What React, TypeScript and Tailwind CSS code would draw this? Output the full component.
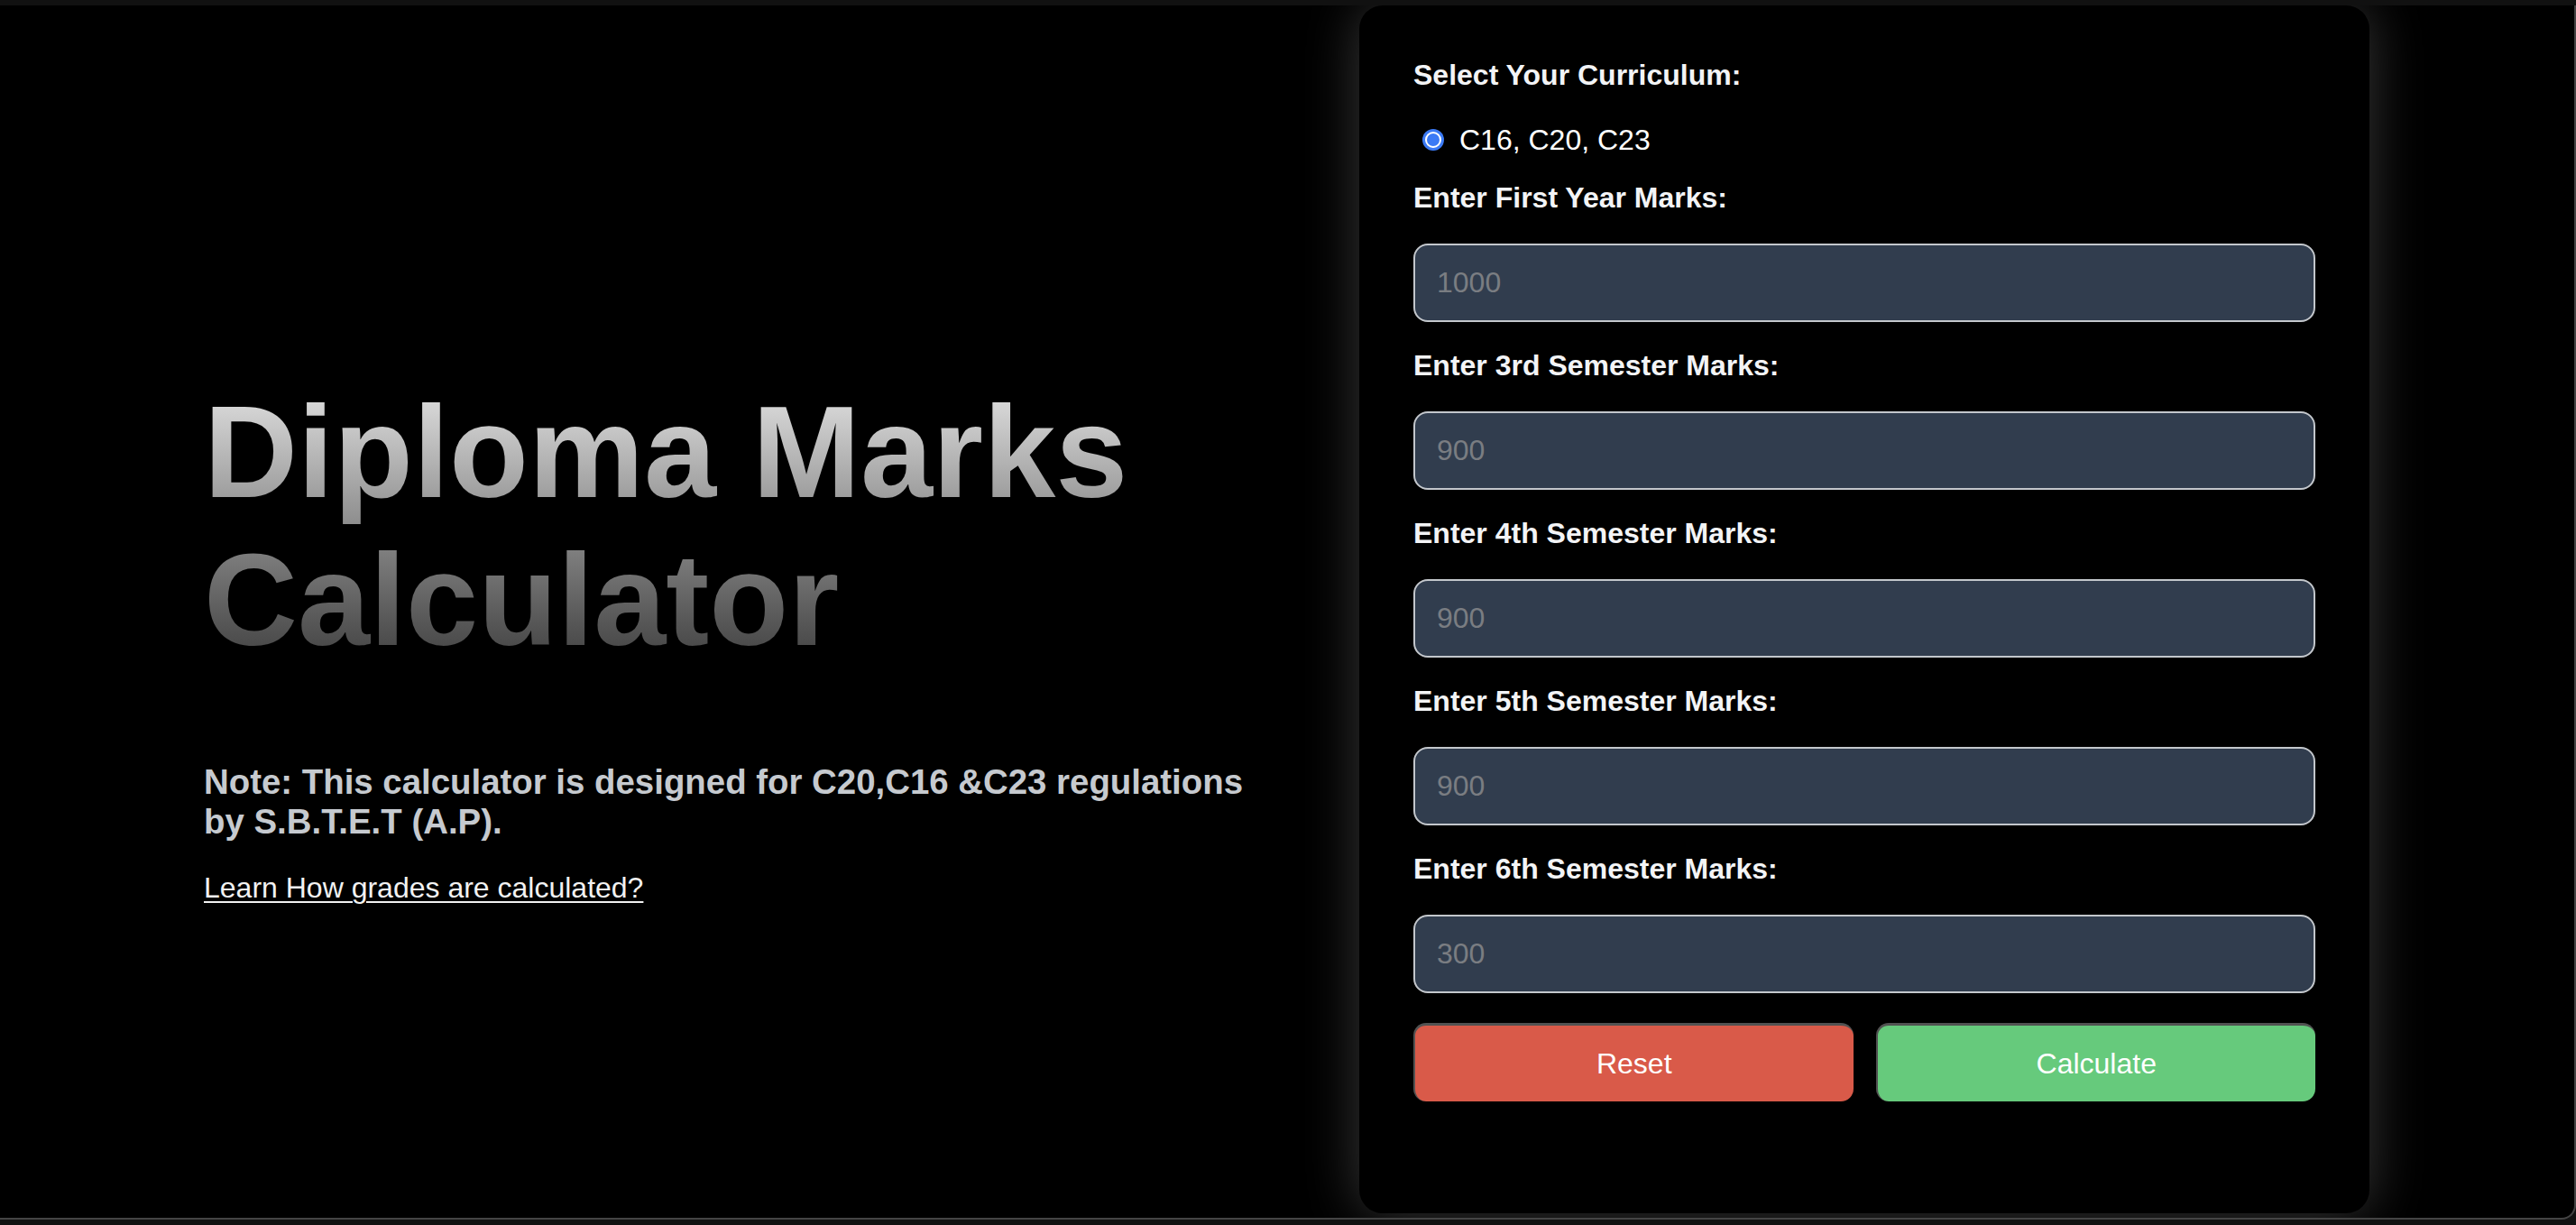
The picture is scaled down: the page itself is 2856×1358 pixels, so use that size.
import React from "react";

const fields = [
  { label: "Enter First Year Marks:", ph: "1000" },
  { label: "Enter 3rd Semester Marks:", ph: "900" },
  { label: "Enter 4th Semester Marks:", ph: "900" },
  { label: "Enter 5th Semester Marks:", ph: "900" },
  { label: "Enter 6th Semester Marks:", ph: "300" },
];

export default function App() {
  return (
    <div
      className="w-full h-[1358px] bg-[#111111] overflow-hidden"
      style={{ fontFamily: '"Liberation Sans", Arial, Helvetica, sans-serif' }}
    >
      <div className="mt-[6px] h-[1346px] bg-black border-b-2 border-r-2 border-[#444] rounded-br-[16px] overflow-hidden flex justify-between pl-[226px] pr-[227px]">
        {/* Left column */}
        <div className="w-[1190px] pt-[414px]">
          <h1 className="text-[144px] leading-[164px] font-bold bg-gradient-to-b from-[#e6e6e6] to-[#3c3c3c] bg-clip-text text-transparent w-fit">
            Diploma Marks
            <br />
            Calculator
          </h1>
          <p className="mt-[97px] text-[38.4px] leading-[44px] font-bold text-[#c6cacf] w-[1180px]">
            Note: This calculator is designed for C20,C16 &amp;C23 regulations by S.B.T.E.T (A.P).
          </p>
          <a href="#" className="block mt-[33px] text-[32px] leading-[37px] text-[#f2f2f2] underline underline-offset-[4px] decoration-[2px] w-fit">
            Learn How grades are calculated?
          </a>
        </div>

        {/* Card */}
        <div className="w-[1120px] h-[1339px] shrink-0 bg-black rounded-[26px] shadow-[0_0_60px_rgba(255,255,255,0.22)] px-[60px] pt-[59px]">
          <div className="text-[32px] leading-[37px] font-bold text-[#f3f4f6]">Select Your Curriculum:</div>
          <label className="mt-[34px] flex items-center h-[37px] text-[32px] text-white">
            <span className="ml-[10px] w-[24px] h-[24px] rounded-full bg-[#3b7af5] p-[3px] flex">
              <span className="flex-1 rounded-full border-[2px] border-white bg-[#3b7af5]" />
            </span>
            <span className="ml-[17px]">C16, C20, C23</span>
          </label>
          <div className="mt-[28px] flex flex-col">
            {fields.map((f) => (
              <div key={f.label} className="mb-[30px]">
                <div className="text-[32px] leading-[37px] font-bold text-[#f3f4f6]">{f.label}</div>
                <input
                  type="number"
                  placeholder={f.ph}
                  className="mt-[32px] block w-full h-[87px] rounded-[16px] border-2 border-[#c3c7cc] bg-[#313d4e] px-[24px] text-[32px] text-white placeholder:text-[#7a7d82] outline-none"
                />
              </div>
            ))}
          </div>
          <div className="mt-[3px] flex gap-[25px]">
            <button className="flex-1 h-[87px] rounded-[14px] bg-[#d95a49] border-t-[3px] border-l-[2px] border-[#525252] text-[32px] text-white">
              Reset
            </button>
            <button className="flex-1 h-[87px] rounded-[14px] bg-[#66ca7c] border-t-[3px] border-l-[2px] border-[#525252] text-[32px] text-white">
              Calculate
            </button>
          </div>
        </div>
      </div>
    </div>
  );
}
